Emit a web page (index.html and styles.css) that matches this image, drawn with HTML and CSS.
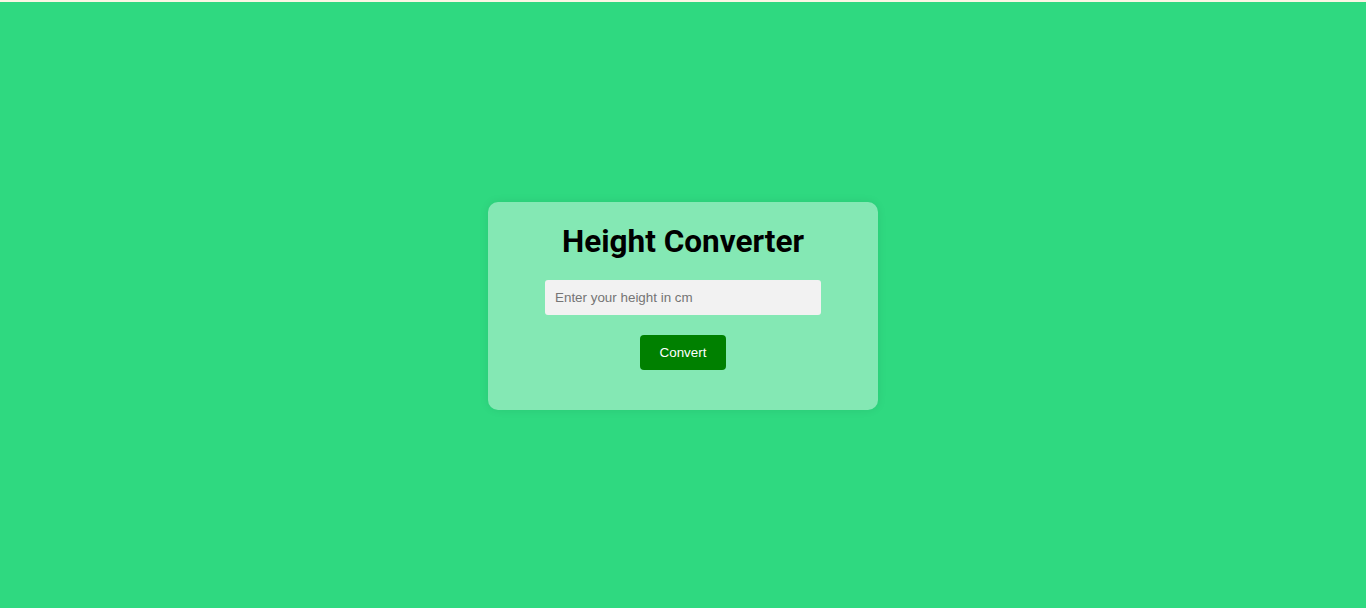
FILE: index.html
```html
<!DOCTYPE html>
<html>
<head>
<meta charset="utf-8">
<link rel="stylesheet" href="styles.css">
</head>
<body>
<div class="page">
  <div class="card">
    <h1 class="title">Height Converter</h1>
    <input class="field" type="text" placeholder="Enter your height in cm">
    <button class="btn">Convert</button>
  </div>
</div>
</body>
</html>
```
FILE: styles.css
```css
html { background: #fbf6e4; }
body { margin: 0; }
.page {
  margin-top: 2px;
  height: 606px;
  box-sizing: border-box;
  padding-top: 2px;
  background: #2fd980;
  display: flex;
  align-items: center;
  justify-content: center;
}
.card {
  width: 390px;
  height: 208px;
  box-sizing: border-box;
  background: #84e8b4;
  border-radius: 10px;
  box-shadow: 0 0 10px rgba(0,0,0,0.08);
  padding-top: 21px;
  display: flex;
  flex-direction: column;
  align-items: center;
}
.title {
  margin: 0;
  font-family: Roboto, sans-serif;
  font-weight: 700;
  font-size: 31.5px;
  line-height: 38px;
  color: #000;
}
.field {
  margin-top: 19px;
  width: 276px;
  height: 35px;
  box-sizing: border-box;
  border: none;
  border-radius: 3px;
  background: #f2f2f2;
  padding: 0 10px;
  font-family: "Liberation Sans", Arial, sans-serif;
  font-size: 13.4px;
  outline: none;
}
.field::placeholder { color: #757575; }
.btn {
  margin-top: 20px;
  width: 86px;
  height: 35px;
  border: none;
  border-radius: 4px;
  background: #008000;
  color: #fff;
  font-family: "Liberation Sans", Arial, sans-serif;
  font-size: 13.4px;
  font-weight: 400;
  padding: 0;
}
```
